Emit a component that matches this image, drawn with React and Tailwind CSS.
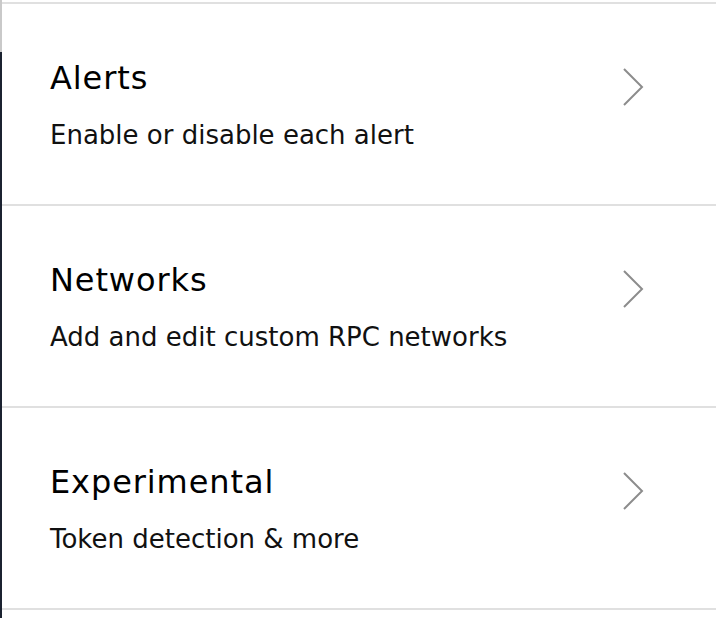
import React from "react";

const rows = [
  { title: "Alerts", desc: "Enable or disable each alert" },
  { title: "Networks", desc: "Add and edit custom RPC networks" },
  { title: "Experimental", desc: "Token detection & more" },
];

function Chevron() {
  return (
    <svg width="22" height="40" viewBox="0 0 22 40" className="shrink-0">
      <polyline points="2,2 20,20 2,38" fill="none" stroke="#8c8c8c" strokeWidth="2" />
    </svg>
  );
}

export default function App() {
  return (
    <div className="flex w-[716px] h-[618px] bg-white overflow-hidden" style={{ fontFamily: "'DejaVu Sans', 'Noto Sans', sans-serif" }}>
      <div className="flex flex-col w-[2px] shrink-0">
        <div className="h-[52px] bg-[#c9c9c9]" />
        <div className="flex-1 bg-[#1b2230]" />
      </div>
      <div className="flex-1 flex flex-col pt-[2px]">
        <div className="h-[2px] bg-[#e0e0e0]" />
        {rows.map((r) => (
          <div key={r.title} className="flex flex-col">
            <div className="h-[200px] flex items-start pl-[48px] pr-[72px] pt-[55px]">
              <div className="flex-1 flex flex-col">
                <div className="text-[32px] leading-[38px] tracking-[0.9px] text-black">{r.title}</div>
                <div className="mt-[22px] text-[26px] leading-[32px] text-[#111]">{r.desc}</div>
              </div>
              <div className="mt-[8px]">
                <Chevron />
              </div>
            </div>
            <div className="h-[2px] bg-[#e0e0e0]" />
          </div>
        ))}
      </div>
    </div>
  );
}
